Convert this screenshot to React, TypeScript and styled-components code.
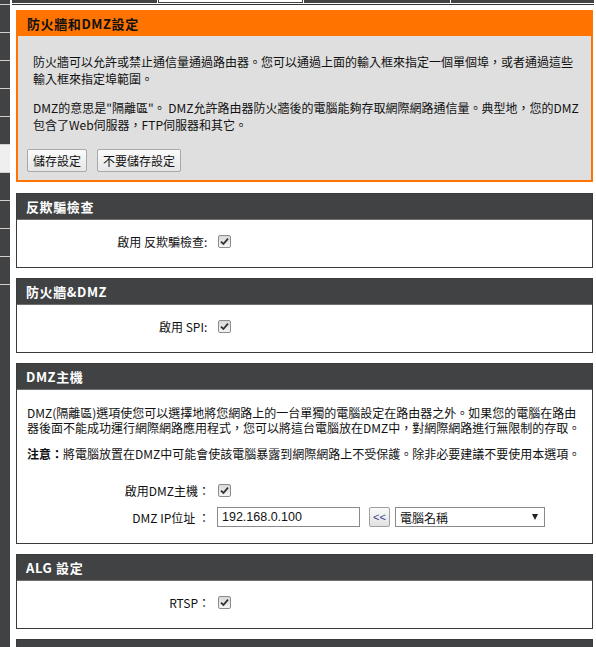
import React from 'react';
import styled, { createGlobalStyle } from 'styled-components';

const GlobalStyle = createGlobalStyle`
  body {
    margin: 0;
    background: #ffffff;
    font-family: "Noto Sans CJK TC", "Liberation Sans", sans-serif;
    font-size: 12px;
    color: #111;
  }
`;

const Page = styled.div`
  display: flex;
  height: 647px;
  overflow: hidden;
`;

const Sidebar = styled.div`
  width: 10px;
  flex-shrink: 0;
  background: #404244;
  padding-top: 4px;
  display: flex;
  flex-direction: column;
`;

const MenuItem = styled.div<{ $active?: boolean }>`
  height: 27px;
  flex-shrink: 0;
  border-top: 1px solid #cfcfcf;
  background: ${(p) => (p.$active ? '#efefef' : '#404244')};
`;

const MenuEnd = styled.div`
  border-top: 1px solid #cfcfcf;
`;

const Main = styled.div`
  flex: 1;
  margin-left: 2px;
`;

const Tabs = styled.div`
  display: flex;
  height: 3px;
  gap: 1px;
  padding-right: 2px;
`;

const Tab = styled.div<{ $w: number; $active?: boolean }>`
  width: ${(p) => p.$w}px;
  flex: ${(p) => (p.$w ? 'none' : '1')};
  background: ${(p) => (p.$active ? '#ffffff' : '#404244')};
  border: ${(p) => (p.$active ? '1px solid #404244' : 'none')};
  border-top: none;
  box-sizing: border-box;
`;

const Rule = styled.div`
  height: 1px;
  margin-top: 1px;
  margin-right: 2px;
  background: #333;
`;

const Content = styled.div`
  padding: 5px 0 0 4px;
  width: 577px;
  display: flex;
  flex-direction: column;
  gap: 10px;
`;

const OrangeBox = styled.div`
  border: 2px solid #ff7300;
  border-top: none;
  background: #dfdfdf;
  margin-bottom: 1px;
`;

const OrangeHead = styled.div`
  height: 26px;
  background: #ff7300;
  display: flex;
  align-items: center;
  padding-left: 9px;
  font-size: 13px;
  font-weight: bold;
  letter-spacing: 0.6px;
  color: #111;
`;

const OrangeBody = styled.div`
  padding: 17px 9px 8px;
`;

const Para = styled.p<{ $gap?: number }>`
  margin: 0 0 ${(p) => p.$gap ?? 0}px 6px;
  line-height: 17px;
`;

const ButtonRow = styled.div`
  display: flex;
  gap: 10px;
  margin-top: 16px;
`;

const Button = styled.button`
  height: 23px;
  padding: 0 5px;
  font-family: inherit;
  font-size: 12px;
  color: #111;
  border: 1px solid #a9a9a9;
  border-radius: 2px;
  background: linear-gradient(#fbfbfb, #e6e6e6);
`;

const Section = styled.div`
  border: 1px solid #3a3a3a;
  background: #fff;
`;

const SectionHead = styled.div`
  height: 25px;
  background: #404244;
  border-bottom: 1px solid #707070;
  display: flex;
  align-items: center;
  padding-left: 9px;
  color: #fff;
  font-size: 13px;
  font-weight: bold;
  letter-spacing: 0.6px;
`;

const SectionBody = styled.div`
  padding: 11px 0 16px;
  display: flex;
  flex-direction: column;
  gap: 7px;
`;

const TextBlock = styled.div`
  padding: 4px 10px 0;
  line-height: 15px;
  display: flex;
  flex-direction: column;
  gap: 11px;
  margin-bottom: 12px;
`;

const Row = styled.div`
  display: grid;
  grid-template-columns: 200px 1fr;
  height: 20px;
  align-items: center;
`;

const Label = styled.div`
  text-align: right;
  padding-right: 7px;
  white-space: pre;
`;

const Value = styled.div`
  display: flex;
  align-items: center;
`;

const Box = styled.span`
  width: 11px;
  height: 11px;
  margin-left: 1px;
  border: 1px solid #8c8c8c;
  border-radius: 2px;
  background: linear-gradient(#d9d9d9, #f4f4f4);
  display: flex;
  align-items: center;
  justify-content: center;
`;

const TextInput = styled.div`
  width: 143px;
  height: 20px;
  box-sizing: border-box;
  border: 1px solid #8a8a8a;
  padding-left: 4px;
  display: flex;
  align-items: center;
  font-family: "Liberation Sans", sans-serif;
  font-size: 12.5px;
  color: #111;
`;

const SmallButton = styled.div`
  margin-left: 9px;
  width: 21px;
  height: 20px;
  box-sizing: border-box;
  border: 1px solid #a0a0a0;
  border-radius: 2px;
  background: linear-gradient(#fafafa, #e2e2e2);
  display: flex;
  align-items: center;
  justify-content: center;
  font-family: "Liberation Sans", sans-serif;
  font-size: 11px;
  color: #3a3f8a;
`;

const SelectBox = styled.div`
  margin-left: 5px;
  width: 150px;
  height: 20px;
  box-sizing: border-box;
  border: 1px solid #8a8a8a;
  padding: 0 6px 0 4px;
  display: flex;
  align-items: center;
  justify-content: space-between;
  background: #fff;
`;

const Arrow = styled.span`
  width: 0;
  height: 0;
  border-left: 3px solid transparent;
  border-right: 3px solid transparent;
  border-top: 6px solid #222;
`;

const Check = () => (
  <Box>
    <svg width="9" height="9" viewBox="0 0 9 9">
      <path d="M1 4.6 L3.4 7 L8 1.6" fill="none" stroke="#333" strokeWidth="1.8" />
    </svg>
  </Box>
);

const CheckRow = ({ label }: { label: string }) => (
  <Row>
    <Label>{label}</Label>
    <Value>
      <Check />
    </Value>
  </Row>
);

const App: React.FC = () => (
  <Page>
    <GlobalStyle />
    <Sidebar>
      {Array.from({ length: 10 }).map((_, i) => (
        <MenuItem key={i} $active={i === 5} />
      ))}
      <MenuEnd />
    </Sidebar>
    <Main>
      <Tabs>
        <Tab $w={145} />
        <Tab $w={145} $active />
        <Tab $w={146} />
        <Tab $w={0} />
      </Tabs>
      <Rule />
      <Content>
        <OrangeBox>
          <OrangeHead>防火牆和DMZ設定</OrangeHead>
          <OrangeBody>
            <Para $gap={12}>
              防火牆可以允許或禁止通信量通過路由器。您可以通過上面的輸入框來指定一個單個埠，或者通過這些
              <br />
              輸入框來指定埠範圍。
            </Para>
            <Para>
              DMZ的意思是"隔離區"。 DMZ允許路由器防火牆後的電腦能夠存取網際網路通信量。典型地，您的DMZ
              <br />
              包含了Web伺服器，FTP伺服器和其它。
            </Para>
            <ButtonRow>
              <Button>儲存設定</Button>
              <Button>不要儲存設定</Button>
            </ButtonRow>
          </OrangeBody>
        </OrangeBox>

        <Section>
          <SectionHead>反欺騙檢查</SectionHead>
          <SectionBody>
            <CheckRow label="啟用 反欺騙檢查: " />
          </SectionBody>
        </Section>

        <Section>
          <SectionHead>防火牆&amp;DMZ</SectionHead>
          <SectionBody>
            <CheckRow label="啟用 SPI: " />
          </SectionBody>
        </Section>

        <Section>
          <SectionHead>DMZ主機</SectionHead>
          <SectionBody>
            <TextBlock>
              <div>
                DMZ(隔離區)選項使您可以選擇地將您網路上的一台單獨的電腦設定在路由器之外。如果您的電腦在路由
                <br />
                器後面不能成功運行網際網路應用程式，您可以將這台電腦放在DMZ中，對網際網路進行無限制的存取。
              </div>
              <div>
                <b>注意：</b>將電腦放置在DMZ中可能會使該電腦暴露到網際網路上不受保護。除非必要建議不要使用本選項。
              </div>
            </TextBlock>
            <CheckRow label="啟用DMZ主機：" />
            <Row>
              <Label>DMZ IP位址 ：</Label>
              <Value>
                <TextInput>192.168.0.100</TextInput>
                <SmallButton>&lt;&lt;</SmallButton>
                <SelectBox>
                  電腦名稱
                  <Arrow />
                </SelectBox>
              </Value>
            </Row>
          </SectionBody>
        </Section>

        <Section>
          <SectionHead>ALG 設定</SectionHead>
          <SectionBody>
            <CheckRow label="RTSP：" />
          </SectionBody>
        </Section>

        <Section>
          <SectionHead />
          <SectionBody />
        </Section>
      </Content>
    </Main>
  </Page>
);

export default App;
